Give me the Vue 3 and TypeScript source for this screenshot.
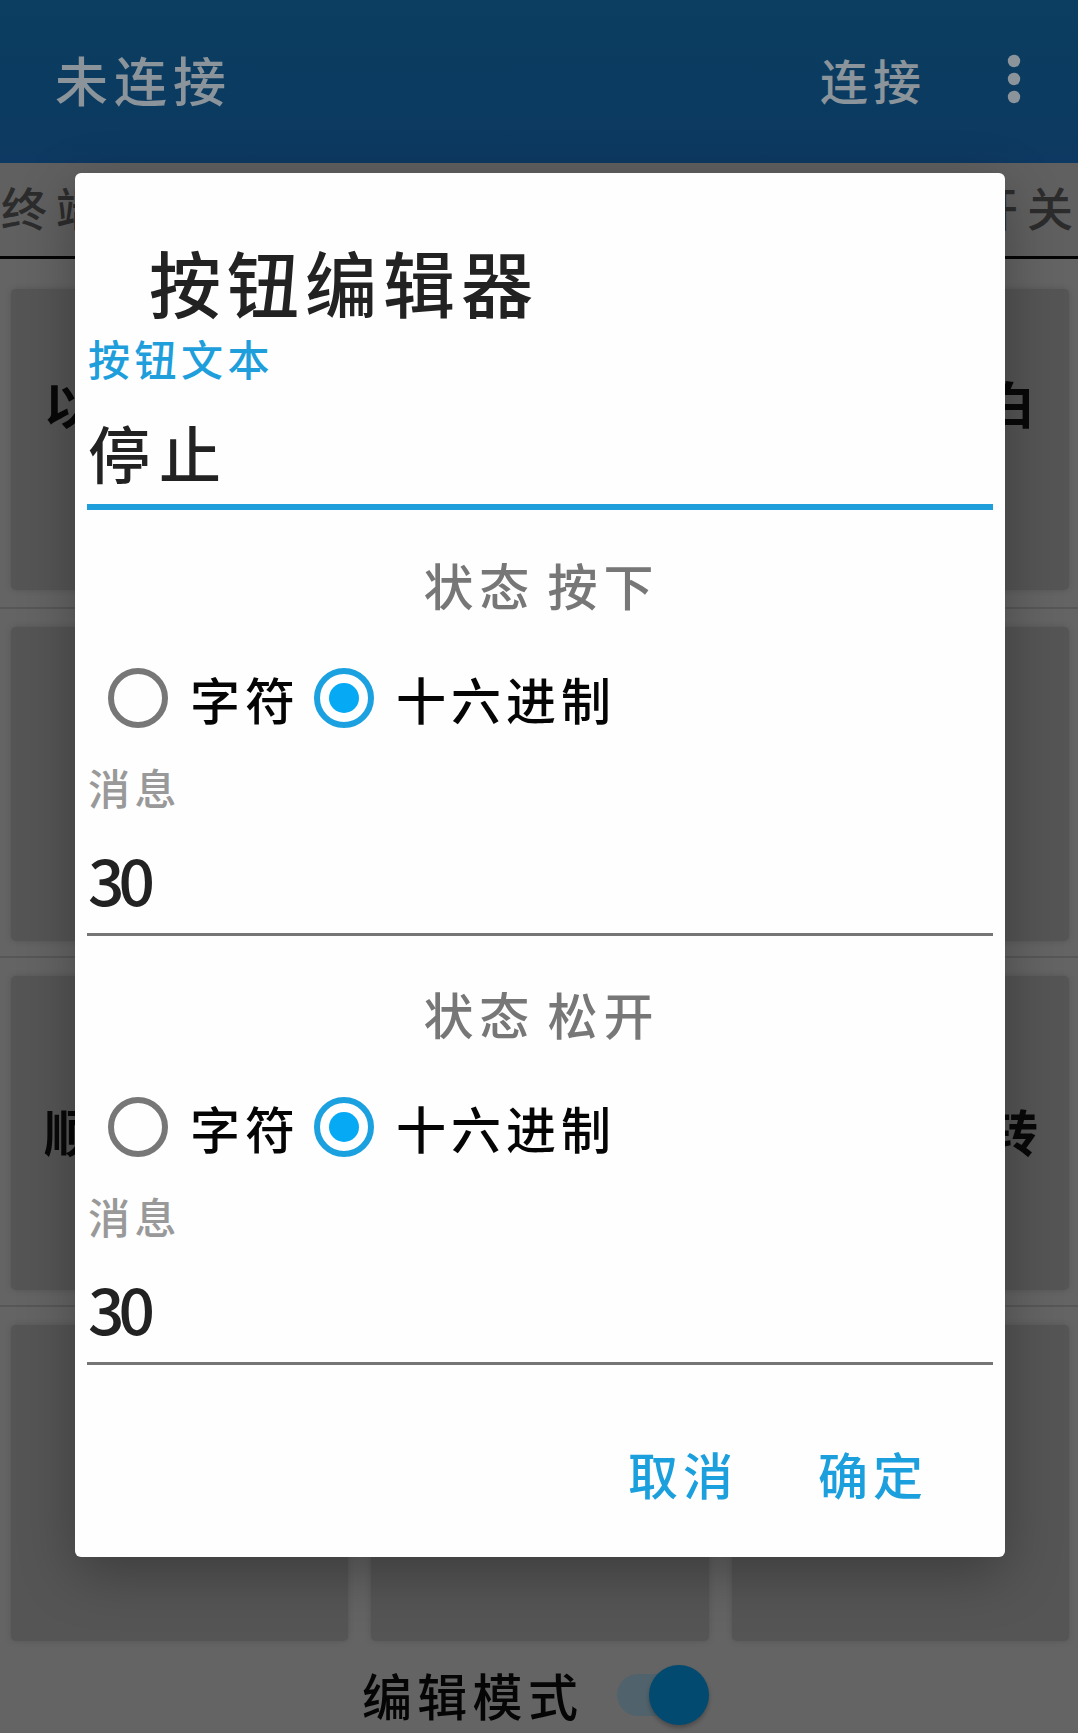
<script setup lang="ts">
interface Section {
  state: string
  message: string
}

const rows: { left: string; right: string }[] = [
  { left: '以', right: '白' },
  { left: '', right: '' },
  { left: '顺', right: '转' },
  { left: '', right: '' },
]

const sections: Section[] = [
  { state: '状态 按下', message: '30' },
  { state: '状态 松开', message: '30' },
]
</script>

<template>
  <div class="screen">
    <header class="bar">
      <span class="bar-title">未连接</span>
      <span class="bar-action">连接</span>
      <svg class="more" width="14" height="50" viewBox="0 0 14 50">
        <circle cx="7" cy="7" r="6.2" />
        <circle cx="7" cy="25" r="6.2" />
        <circle cx="7" cy="43" r="6.2" />
      </svg>
    </header>
    <nav class="tabs">
      <span>终端</span>
      <span>开关</span>
    </nav>
    <main class="pad">
      <div v-for="(row, i) in rows" :key="i" class="pad-row">
        <div class="key key-left">{{ row.left }}</div>
        <div class="key"></div>
        <div class="key key-right">{{ row.right }}</div>
      </div>
    </main>
    <footer class="mode">
      <span>编辑模式</span>
      <span class="switch"><span class="thumb"></span></span>
    </footer>

    <section class="dialog">
      <h1>按钮编辑器</h1>
      <div class="label active">按钮文本</div>
      <div class="value focused">停止</div>
      <div v-for="s in sections" :key="s.state" class="section">
        <div class="state">{{ s.state }}</div>
        <div class="radios">
          <span class="radio"></span>
          <span class="option first">字符</span>
          <span class="radio on"></span>
          <span class="option">十六进制</span>
        </div>
        <div class="label">消息</div>
        <div class="value number">{{ s.message }}</div>
      </div>
      <div class="actions">
        <span>取消</span>
        <span>确定</span>
      </div>
    </section>
  </div>
</template>

<style>
body {
  margin: 0;
  background: #646464;
}
</style>

<style scoped>
.screen {
  position: relative;
  width: 1078px;
  height: 1733px;
  overflow: hidden;
  background: #646464;
  font-family: 'Noto Sans CJK SC', sans-serif;
  font-weight: 500;
  white-space: nowrap;
  display: flex;
  flex-direction: column;
}
.bar {
  height: 163px;
  box-sizing: border-box;
  padding: 0 57px 5px 55px;
  display: flex;
  align-items: center;
  background: linear-gradient(#0b3e61, #0b3b60 60%, #0e3962);
  color: #8b949a;
}
.bar-title {
  font-size: 53px;
  letter-spacing: 6px;
  flex: 1;
}
.bar-action {
  font-size: 48px;
  letter-spacing: 5px;
  margin-right: 81px;
}
.more {
  fill: #8b949a;
}
.tabs {
  height: 93px;
  padding: 0 0 0 1px;
  display: flex;
  justify-content: space-between;
  border-bottom: 3px solid #050505;
  font-size: 46px;
  line-height: 86px;
  letter-spacing: 9px;
  color: #2c2c2c;
  background: #606060;
}
.tabs span:last-child {
  margin-right: -4px;
}
.pad {
  padding-top: 19px;
}
.pad-row {
  height: 349px;
  box-sizing: border-box;
  padding: 18px 9px 15px 11px;
  border-top: 2px solid #575757;
  display: grid;
  grid-template-columns: repeat(3, 1fr);
  column-gap: 23px;
}
.pad-row:first-child {
  height: 329px;
  padding-top: 11px;
  border-top: 0;
  padding-bottom: 17px;
}
.pad-row:last-child {
  height: 351px;
}
.key {
  display: flex;
  align-items: center;
  border-radius: 5px;
  background: #555;
  box-shadow: 0 0 5px #555;
  font-size: 50px;
  font-weight: 700;
  color: #080808;
  line-height: 60px;
  padding-bottom: 6px;
}
.pad-row:first-child .key {
  padding-bottom: 76px;
}
.key-left {
  padding-left: 33px;
}
.key-right {
  justify-content: flex-end;
  padding-right: 31px;
}
.pad-row:first-child .key-right {
  padding-right: 34px;
}
.mode {
  flex: 1;
  display: flex;
  align-items: center;
  padding: 0 0 2px 362px;
  font-size: 50px;
  line-height: 60px;
  letter-spacing: 5.3px;
  color: #050505;
}
.switch {
  width: 92px;
  height: 42px;
  margin: 2px 0 0 34px;
  border-radius: 21px;
  background: #50626b;
  display: flex;
  align-items: center;
  justify-content: flex-end;
}
.thumb {
  width: 60px;
  height: 60px;
  flex: none;
  border-radius: 50%;
  background: #034a70;
  box-shadow: 0 3px 4px rgba(0, 0, 0, 0.25);
}
.dialog {
  position: absolute;
  left: 75px;
  top: 173px;
  width: 930px;
  height: 1384px;
  box-sizing: border-box;
  padding: 60px 12px 0;
  border-radius: 6px;
  background: #fefefe;
  box-shadow: 0 16px 56px rgba(0, 0, 0, 0.3);
}
h1 {
  margin: 0 0 4px;
  padding-left: 62px;
  font-size: 72px;
  line-height: 96px;
  font-weight: 500;
  letter-spacing: 6px;
  color: #222;
}
.label {
  font-size: 42px;
  line-height: 50px;
  letter-spacing: 4.5px;
  padding-left: 1px;
  color: #999;
}
.label.active {
  color: #1e9fdc;
}
.value {
  margin-top: 24px;
  padding: 0 0 13px 1px;
  border-bottom: 3px solid #757575;
  font-size: 62px;
  line-height: 84px;
  letter-spacing: 9px;
  color: #222;
}
.value.focused {
  margin-top: 27px;
  padding-bottom: 10px;
  border-bottom: 6px solid #1e9fdc;
}
.value.number {
  font-size: 64px;
  letter-spacing: -6px;
}
.section {
  padding-top: 42px;
}
.focused + .section {
  padding-top: 39px;
}
.state {
  text-align: center;
  font-size: 50px;
  line-height: 70px;
  letter-spacing: 6px;
  word-spacing: -5px;
  padding-left: 3px;
  color: #777;
}
.radios {
  height: 60px;
  margin: 49px 0 34px;
  padding-left: 21px;
  display: flex;
  align-items: center;
}
.radio {
  width: 60px;
  height: 60px;
  box-sizing: border-box;
  border: 6px solid #777;
  border-radius: 50%;
  display: flex;
  align-items: center;
  justify-content: center;
}
.radio.on {
  border-color: #1ba1e0;
}
.radio.on::after {
  content: '';
  width: 30px;
  height: 30px;
  border-radius: 50%;
  background: #06a9f4;
}
.option {
  margin-left: 22px;
  font-size: 50px;
  line-height: 60px;
  letter-spacing: 5px;
  color: #050505;
}
.option.first {
  width: 124px;
}
.actions {
  margin-top: 78px;
  padding-right: 65px;
  display: flex;
  justify-content: flex-end;
  gap: 80px;
  font-size: 50px;
  line-height: 60px;
  letter-spacing: 5px;
  color: #1c9fdd;
}
</style>
